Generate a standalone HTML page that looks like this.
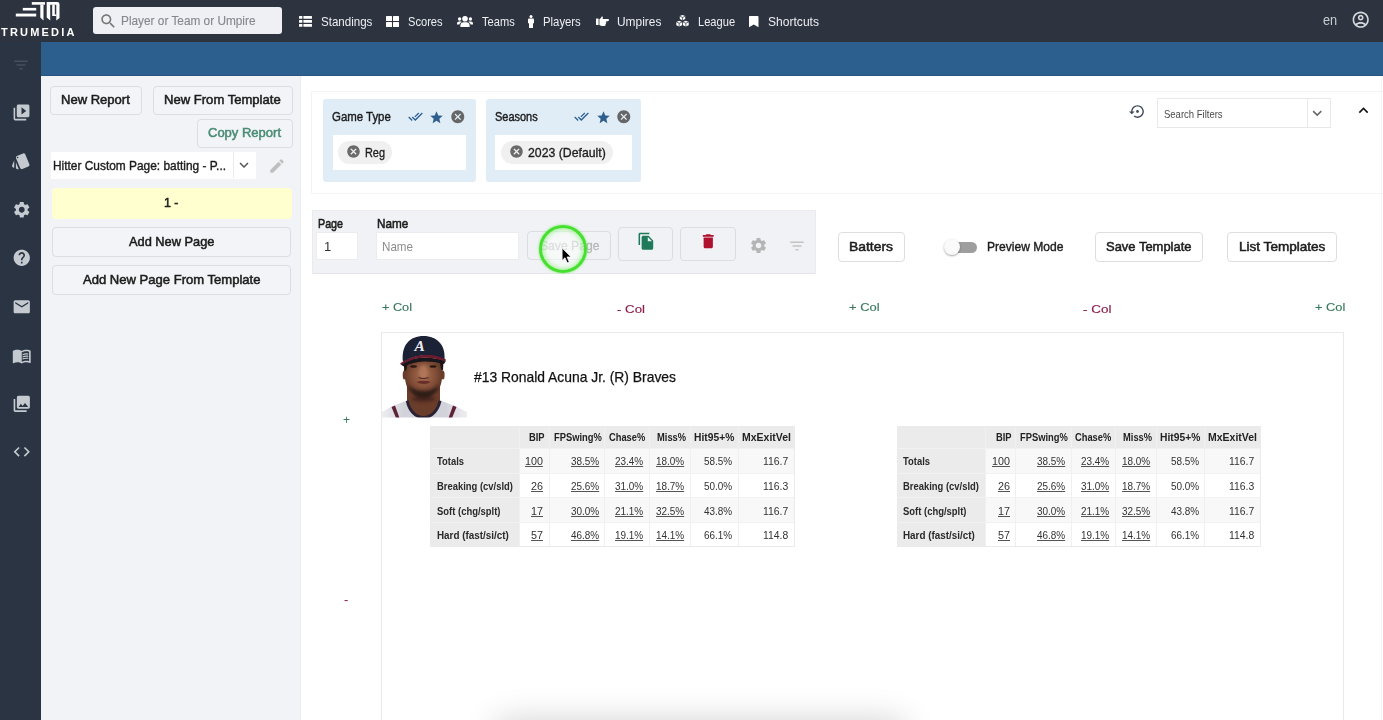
<!DOCTYPE html>
<html lang="en"><head><meta charset="utf-8"><title>TruMedia - Custom Page Builder</title>
<style>

*{box-sizing:border-box;margin:0;padding:0}
html,body{width:1383px;height:720px;overflow:hidden;background:#fff;font-family:"Liberation Sans",sans-serif}
.a{position:absolute}
.t{position:absolute;white-space:nowrap;line-height:1;transform-origin:0 0;font-family:"Liberation Sans",sans-serif}
svg{position:absolute;display:block;overflow:visible}
.btn{position:absolute;border:1px solid #dcdde0;border-radius:4px;background:#f3f4f7}
.wbtn{position:absolute;border:1px solid #dedede;border-radius:4px;background:#fff}
.u{text-decoration:underline}

</style></head><body>
<div id="app" style="position:relative;width:1383px;height:720px;overflow:hidden;background:#fff">
<div class="a" style="left:0px;top:0px;width:1383px;height:42px;background:#2d3440"></div>
<div class="a" style="left:0px;top:42px;width:41px;height:678px;background:#2b3442"></div>
<div class="a" style="left:41px;top:42px;width:1342px;height:34px;background:#2c5f8e;border-bottom:1px solid #27557f"></div>
<div class="a" style="left:41px;top:76px;width:260px;height:644px;background:#f1f3f7;border-right:1px solid #ebecf3"></div>
<header>
<svg style="left:0;top:0" width="80" height="24" viewBox="0 0 80 24">
<g fill="#fff">
<rect x="31.8" y="2.100" width="13.200" height="2.600"/>
<rect x="22.800" y="7.900" width="13.400" height="2.600"/>
<rect x="15.800" y="13.600" width="20.400" height="2.900"/>
<path d="M40.300 4.600h3.200v16l-3.200-3z"/>
<path d="M46.700 2.100h10.600q2.200 0 2.200 2.200v13.600l-3.200 2.700V4.700h-6.100v15.900l-3.500-3z"/>
<path d="M52.200 4.600h2.600v9.800h1.600v1.600h-4.200z"/>
</g></svg>
<span class="t" style="left:1.00px;top:27.19px;font-size:11px;font-weight:700;color:#fff;letter-spacing:2.191px;will-change:transform;">TRUMEDIA</span>
<div class="a" style="left:92.5px;top:7px;width:189px;height:27px;background:#eef0f4;border-radius:3px"></div>
<svg style="left:98.5px;top:12.3px" width="18.5" height="18.5" viewBox="0 0 24 24" ><path fill="#777" d="M15.500 14h-.790l-.280-.270C15.410 12.590 16 11.110 16 9.500 16 5.910 13.090 3 9.500 3S3 5.910 3 9.500 5.910 16 9.500 16c1.610 0 3.090-.590 4.230-1.570l.270.280v.790l5 4.990L20.490 19l-4.990-5zm-6 0C7.010 14 5 11.990 5 9.500S7.010 5 9.500 5 14 7.010 14 9.500 11.990 14 9.500 14z"/></svg>
<span class="t" style="left:120.50px;top:13.97px;font-size:13.5px;font-weight:400;color:#85888d;-webkit-text-stroke:0.15px #85888d;transform:scaleX(0.8759);">Player or Team or Umpire</span>
<span class="t" style="left:321.00px;top:15.20px;font-size:13px;font-weight:400;color:#eceef1;transform:scaleX(0.8888);">Standings</span>
<span class="t" style="left:408.00px;top:15.20px;font-size:13px;font-weight:400;color:#eceef1;transform:scaleX(0.8550);">Scores</span>
<span class="t" style="left:481.70px;top:15.20px;font-size:13px;font-weight:400;color:#eceef1;transform:scaleX(0.8539);">Teams</span>
<span class="t" style="left:543.20px;top:15.20px;font-size:13px;font-weight:400;color:#eceef1;transform:scaleX(0.8718);">Players</span>
<span class="t" style="left:617.20px;top:15.20px;font-size:13px;font-weight:400;color:#eceef1;transform:scaleX(0.9172);">Umpires</span>
<span class="t" style="left:697.50px;top:15.20px;font-size:13px;font-weight:400;color:#eceef1;transform:scaleX(0.8550);">League</span>
<span class="t" style="left:767.50px;top:15.20px;font-size:13px;font-weight:400;color:#eceef1;transform:scaleX(0.9286);">Shortcuts</span>
<svg style="left:299px;top:16px" width="13" height="11" viewBox="0 0 13 11"><g fill="#fff">
<rect x="0" y="0" width="3.400" height="2.800" rx=".5"/><rect x="4.400" y="0" width="8.600" height="2.800" rx=".5"/>
<rect x="0" y="4" width="3.400" height="2.800" rx=".5"/><rect x="4.400" y="4" width="8.600" height="2.800" rx=".5"/>
<rect x="0" y="8" width="3.400" height="2.800" rx=".5"/><rect x="4.400" y="8" width="8.600" height="2.800" rx=".5"/></g></svg>
<svg style="left:386px;top:16px" width="13" height="11" viewBox="0 0 13 11"><g fill="#fff">
<rect x="0" y="0" width="6" height="5" rx=".5"/><rect x="7" y="0" width="6" height="5" rx=".5"/>
<rect x="0" y="6" width="6" height="5" rx=".5"/><rect x="7" y="6" width="6" height="5" rx=".5"/></g></svg>
<svg style="left:456.500px;top:16px" width="16" height="11" viewBox="0 0 16 11"><g fill="#fff">
<circle cx="8" cy="2.800" r="2.800"/><path d="M3.400 11v-1.600c0-2 1.600-3.200 3.200-3.200h2.800c1.600 0 3.200 1.200 3.200 3.200V11z"/>
<circle cx="2.600" cy="3" r="1.700"/><circle cx="13.400" cy="3" r="1.700"/>
<path d="M0 8.400V7.600c0-1.200.9-2 2-2h1.600c.4 0 .8.100 1.100.3C3.500 6.600 2.600 7.600 2.500 8.400z"/>
<path d="M16 8.400V7.600c0-1.200-.9-2-2-2h-1.600c-.4 0-.8.100-1.100.3 1.200.7 2.100 1.700 2.200 2.500z"/></g></svg>
<svg style="left:528px;top:15px" width="6" height="13" viewBox="0 0 6 13"><g fill="#fff">
<circle cx="3" cy="1.500" r="1.500"/><path d="M1.200 3.400h3.600c.7 0 1.200.5 1.200 1.200v3.600H5V13H1V8.200H0V4.600c0-.7.500-1.200 1.200-1.200z"/></g></svg>
<svg style="left:595.500px;top:16px" width="13" height="10" viewBox="0 0 13 10"><g fill="#fff">
<rect x="0" y="2.600" width="2.600" height="6.400" rx=".4"/>
<path d="M3.400 3.200c1-.3 1.600-1.200 2-2.200.3-.8 1.400-.6 1.500.2.100.6-.1 1.200-.4 1.800h5.300c.7 0 1.200.5 1.200 1.100s-.5 1.100-1.200 1.100H9.600c.5.100.8.500.8.900 0 .5-.4.900-.9.900.4.100.6.400.6.800s-.4.800-.9.800c.2.100.3.300.3.600 0 .4-.4.700-.8.700H5.600c-.8 0-1.500-.3-2.200-.800z"/></g></svg>
<svg style="left:675.500px;top:15px" width="13" height="12" viewBox="0 0 13 12"><g fill="#fff">
<path d="M6.500 0l2.700 1.100v3L6.500 5.300 3.800 4.100v-3z"/><path d="M3.200 5.700l2.900 1.200v3.300L3.200 11.600.3 10.200V6.900z"/><path d="M9.800 5.700l2.900 1.200v3.300l-2.900 1.400-2.900-1.400V6.900z"/></g>
<g fill="none" stroke="#2d3440" stroke-width=".7"><path d="M3.800 1.300l2.700 1.100 2.700-1.100M6.500 2.400v2.700M.3 7l2.900 1.200 2.900-1.200M3.200 8.200v3.200M6.900 7l2.900 1.200 2.900-1.200M9.800 8.200v3.200"/></g></svg>
<svg style="left:748.700px;top:16.200px" width="9.500" height="11.200" viewBox="0 0 9.500 11.200"><path fill="#fff" d="M0 1C0 .4.400 0 1 0h7.500c.6 0 1 .4 1 1v10.200L4.750 8.400 0 11.200z"/></svg>
<span class="t" style="left:1322.60px;top:12.53px;font-size:14.5px;font-weight:400;color:#c8ccd2;transform:scaleX(0.8798);">en</span>
<svg style="left:1351.4px;top:10px" width="19.4" height="19.4" viewBox="0 0 24 24" ><path fill="#d5d8dd" d="M12 2C6.480 2 2 6.480 2 12s4.480 10 10 10 10-4.480 10-10S17.520 2 12 2zM7.350 18.500C8.660 17.560 10.260 17 12 17s3.340.560 4.650 1.500C15.340 19.440 13.740 20 12 20s-3.340-.560-4.650-1.500zm10.790-1.380C16.450 15.800 14.320 15 12 15s-4.450.8-6.140 2.120C4.700 15.730 4 13.950 4 12c0-4.420 3.580-8 8-8s8 3.580 8 8c0 1.950-.7 3.730-1.860 5.120zM12 6c-1.930 0-3.500 1.570-3.500 3.500S10.070 13 12 13s3.500-1.570 3.500-3.500S13.930 6 12 6zm0 5c-.830 0-1.500-.670-1.500-1.500S11.170 8 12 8s1.500.670 1.500 1.500S12.830 11 12 11z"/></svg>
</header>
<nav>
<svg style="left:12px;top:55.5px" width="18" height="18" viewBox="0 0 24 24" ><path fill="#454e5c" d="M10 18h4v-2h-4v2zM3 6v2h18V6H3zm3 7h12v-2H6v2z"/></svg>
<svg style="left:11.5px;top:102.5px" width="19" height="19" viewBox="0 0 24 24" ><path fill="#c5cad1" d="M4 6H2v14c0 1.1.9 2 2 2h14v-2H4V6zm16-4H8c-1.1 0-2 .9-2 2v12c0 1.1.9 2 2 2h12c1.1 0 2-.9 2-2V4c0-1.1-.9-2-2-2zm-8 12.5v-9l6 4.500-6 4.500z"/></svg>
<svg style="left:11px;top:150.5px" width="20" height="20" viewBox="0 0 24 24" ><path fill="#c5cad1" d="M2.530 19.650l1.340.560v-9.030l-2.430 5.860c-.410 1.020.080 2.190 1.090 2.610zm19.500-3.700L17.070 3.980c-.310-.750-1.040-1.210-1.810-1.230-.260 0-.530.040-.790.150L7.100 5.950c-.750.310-1.210 1.030-1.230 1.800-.010.270.040.540.150.800l4.960 11.970c.310.760 1.050 1.220 1.830 1.230.260 0 .520-.050.770-.150l7.360-3.050c1.020-.420 1.510-1.590 1.090-2.600zM7.880 8.750c-.550 0-1-.450-1-1s.450-1 1-1 1 .450 1 1-.450 1-1 1zm-2 11c0 1.100.9 2 2 2h1.450l-3.450-8.340v6.340z"/></svg>
<svg style="left:11.5px;top:199.5px" width="19.5" height="19.5" viewBox="0 0 24 24" ><path fill="#c5cad1" d="M19.140 12.940c.040-.3.060-.610.060-.940 0-.320-.020-.640-.070-.940l2.030-1.580c.180-.140.230-.410.120-.610l-1.920-3.320c-.120-.220-.370-.290-.590-.220l-2.390.960c-.5-.380-1.030-.7-1.620-.940l-.360-2.540c-.040-.240-.240-.410-.480-.410h-3.840c-.240 0-.430.170-.470.410l-.360 2.540c-.590.240-1.130.570-1.620.940l-2.390-.960c-.220-.080-.470 0-.590.220L2.740 8.870c-.120.210-.080.470.120.610l2.030 1.580c-.050.3-.090.630-.090.940s.020.640.070.940l-2.030 1.580c-.180.140-.230.410-.120.610l1.920 3.320c.120.220.370.290.590.220l2.390-.960c.5.380 1.030.7 1.620.940l.360 2.540c.050.240.240.410.480.410h3.840c.240 0 .440-.170.470-.410l.360-2.540c.590-.240 1.130-.560 1.620-.940l2.390.960c.220.080.470 0 .590-.220l1.920-3.320c.120-.220.070-.470-.120-.610l-2.010-1.580zM12 15.600c-1.980 0-3.600-1.620-3.600-3.600s1.620-3.600 3.600-3.600 3.600 1.620 3.600 3.600-1.620 3.600-3.600 3.600z"/></svg>
<svg style="left:11.5px;top:248px" width="19.5" height="19.5" viewBox="0 0 24 24" ><path fill="#c5cad1" d="M12 2C6.480 2 2 6.480 2 12s4.480 10 10 10 10-4.480 10-10S17.520 2 12 2zm1 17h-2v-2h2v2zm2.070-7.750l-.9.920C13.450 12.900 13 13.500 13 15h-2v-.5c0-1.100.450-2.100 1.170-2.830l1.240-1.260c.370-.360.590-.860.590-1.410 0-1.100-.9-2-2-2s-2 .9-2 2H8c0-2.210 1.790-4 4-4s4 1.790 4 4c0 .880-.360 1.680-.930 2.250z"/></svg>
<svg style="left:11.5px;top:296.5px" width="19.5" height="19.5" viewBox="0 0 24 24" ><path fill="#c5cad1" d="M20 4H4c-1.100 0-1.990.9-1.990 2L2 18c0 1.100.9 2 2 2h16c1.100 0 2-.9 2-2V6c0-1.100-.9-2-2-2zm0 4l-8 5-8-5V6l8 5 8-5v2z"/></svg>
<svg style="left:11.5px;top:346px" width="19.5" height="19.5" viewBox="0 0 24 24" ><path fill="#c5cad1" d="M21 5c-1.110-.350-2.330-.5-3.500-.5-1.950 0-4.050.4-5.500 1.500-1.450-1.100-3.550-1.500-5.500-1.500S2.450 4.900 1 6v14.650c0 .250.250.5.5.5.1 0 .150-.050.250-.050C3.100 20.450 5.050 20 6.500 20c1.950 0 4.050.4 5.500 1.500 1.350-.850 3.800-1.500 5.500-1.500 1.650 0 3.350.3 4.750 1.050.1.050.150.050.250.050.250 0 .5-.250.5-.5V6c-.6-.450-1.250-.750-2-1zm0 13.500c-1.100-.350-2.300-.5-3.500-.5-1.700 0-4.150.650-5.500 1.500V8c1.350-.850 3.800-1.500 5.500-1.500 1.200 0 2.400.150 3.500.5v11.500zM17.500 10.500c.880 0 1.730.090 2.500.260V9.240c-.790-.150-1.640-.240-2.500-.240-1.700 0-3.240.290-4.500.830v1.660c1.130-.640 2.700-.990 4.500-.990zM13 12.490v1.660c1.130-.640 2.700-.990 4.500-.990.880 0 1.730.090 2.500.260V11.900c-.790-.150-1.640-.240-2.500-.240-1.700 0-3.240.3-4.500.830zM17.500 14.330c-1.700 0-3.240.290-4.500.830v1.660c1.130-.640 2.700-.990 4.500-.990.880 0 1.730.090 2.500.260v-1.520c-.790-.160-1.640-.240-2.500-.240z"/></svg>
<svg style="left:11.5px;top:394px" width="19.5" height="19.5" viewBox="0 0 24 24" ><path fill="#c5cad1" d="M22 16V4c0-1.100-.9-2-2-2H8c-1.100 0-2 .9-2 2v12c0 1.100.9 2 2 2h12c1.100 0 2-.9 2-2zm-11-4l2.030 2.710L16 11l4 5H8l3-4zM2 6v14c0 1.100.9 2 2 2h14v-2H4V6H2z"/></svg>
<svg style="left:11.5px;top:442px" width="19.5" height="19.5" viewBox="0 0 24 24" ><path fill="#c5cad1" d="M9.400 16.600L4.800 12l4.600-4.600L8 6l-6 6 6 6 1.400-1.400zm5.200 0l4.600-4.600-4.600-4.600L16 6l6 6-6 6-1.400-1.400z"/></svg>
</nav>
<aside>
<div class="btn" style="left:50px;top:86px;width:91.5px;height:28.5px;"></div>
<div class="btn" style="left:153px;top:86px;width:139.5px;height:28.5px;"></div>
<div class="btn" style="left:197px;top:118.5px;width:95.5px;height:29px;"></div>
<span class="t" style="left:60.80px;top:94.30px;font-size:12.4px;font-weight:400;color:#1c1c1c;-webkit-text-stroke:0.5px #1c1c1c;transform:scaleX(1.0516);">New Report</span>
<span class="t" style="left:163.90px;top:94.30px;font-size:12.4px;font-weight:400;color:#1c1c1c;-webkit-text-stroke:0.5px #1c1c1c;transform:scaleX(1.0548);">New From Template</span>
<span class="t" style="left:208.00px;top:126.80px;font-size:12.4px;font-weight:400;color:#4a8c73;-webkit-text-stroke:0.5px #4a8c73;transform:scaleX(1.0494);">Copy Report</span>
<div class="a" style="left:50.5px;top:151.5px;width:205px;height:27px;background:#fff"></div>
<div class="a" style="left:232.5px;top:152px;width:1px;height:26px;background:#ececec"></div>
<span class="t" style="left:53.40px;top:158.57px;font-size:13.5px;font-weight:400;color:#1c1c1c;-webkit-text-stroke:0.4px #1c1c1c;transform:scaleX(0.8811);">Hitter Custom Page: batting - P...</span>
<svg style="left:235px;top:155.5px" width="18" height="18" viewBox="0 0 24 24" ><path fill="#555" d="M16.590 8.590L12 13.170 7.410 8.590 6 10l6 6 6-6z"/></svg>
<svg style="left:267.5px;top:157px" width="18" height="18" viewBox="0 0 24 24" ><path fill="#bfbfbf" d="M3 17.250V21h3.750L17.810 9.940l-3.750-3.750L3 17.250zM20.710 7.040c.390-.390.390-1.020 0-1.410l-2.340-2.340c-.390-.390-1.020-.390-1.410 0l-1.830 1.830 3.750 3.750 1.830-1.830z"/></svg>
<div class="a" style="left:52.2px;top:188px;width:239.6px;height:31.2px;background:#ffffd0;border-radius:4px"></div>
<span class="t" style="left:163.50px;top:196.80px;font-size:12.4px;font-weight:400;color:#1c1c1c;-webkit-text-stroke:0.5px #1c1c1c;transform:scaleX(1.0022);">1 -</span>
<div class="btn" style="left:52px;top:227px;width:239px;height:29.5px;"></div>
<div class="btn" style="left:52px;top:265px;width:239px;height:29.5px;"></div>
<span class="t" style="left:128.50px;top:236.00px;font-size:12.4px;font-weight:400;color:#1c1c1c;-webkit-text-stroke:0.5px #1c1c1c;transform:scaleX(1.0342);">Add New Page</span>
<span class="t" style="left:82.50px;top:273.80px;font-size:12.4px;font-weight:400;color:#1c1c1c;-webkit-text-stroke:0.5px #1c1c1c;transform:scaleX(1.0533);">Add New Page From Template</span>
</aside>
<main>
<div class="a" style="left:310.5px;top:91px;width:1072px;height:103px;background:#fff;border:1px solid #f4f4f4;border-right:none"></div>
<div class="a" style="left:1381px;top:76px;width:1px;height:644px;background:#f5f5f8"></div>
<div class="a" style="left:323px;top:99px;width:152.7px;height:83px;background:#e0edf7;border-radius:3px"></div>
<div class="a" style="left:332.5px;top:134.8px;width:133.7px;height:35px;background:#fff"></div>
<span class="t" style="left:331.80px;top:110.07px;font-size:13.5px;font-weight:400;color:#1d1d1d;-webkit-text-stroke:0.45px #1d1d1d;transform:scaleX(0.8455);">Game Type</span>
<svg style="left:407.7px;top:108.5px" width="15" height="15" viewBox="0 0 24 24" ><path fill="#2d5f8e" d="M18 7l-1.410-1.410-6.340 6.340 1.410 1.410L18 7zm4.240-1.410L11.660 16.170 7.480 12l-1.410 1.410L11.660 19l12-12-1.420-1.410zM.410 13.410L6 19l1.410-1.410L1.830 12 .410 13.410z"/></svg>
<svg style="left:429.2px;top:109.5px" width="15" height="15" viewBox="0 0 24 24" ><path fill="#2d5f8e" d="M12 17.270L18.180 21l-1.640-7.030L22 9.240l-7.190-.610L12 2 9.190 8.630 2 9.240l5.460 4.730L5.820 21z"/></svg>
<svg style="left:449.5px;top:109px" width="15.6" height="15.6" viewBox="0 0 24 24" ><path fill="#666" d="M12 2C6.470 2 2 6.470 2 12s4.470 10 10 10 10-4.470 10-10S17.530 2 12 2zm5 13.590L15.590 17 12 13.410 8.410 17 7 15.590 10.590 12 7 8.410 8.410 7 12 10.590 15.590 7 17 8.410 13.410 12 17 15.590z"/></svg>
<div class="a" style="left:338.3px;top:140.5px;width:54px;height:23.5px;background:#f0f0f0;border-radius:12px"></div>
<svg style="left:346px;top:144.2px" width="15" height="15" viewBox="0 0 24 24" ><path fill="#6a6a6a" d="M12 2C6.470 2 2 6.470 2 12s4.470 10 10 10 10-4.470 10-10S17.530 2 12 2zm5 13.590L15.590 17 12 13.410 8.410 17 7 15.590 10.590 12 7 8.410 8.410 7 12 10.590 15.590 7 17 8.410 13.410 12 17 15.590z"/></svg>
<span class="t" style="left:364.70px;top:145.77px;font-size:13.5px;font-weight:400;color:#1d1d1d;-webkit-text-stroke:0.35px #1d1d1d;transform:scaleX(0.8076);">Reg</span>
<div class="a" style="left:485.9px;top:99px;width:155.4px;height:83px;background:#e0edf7;border-radius:3px"></div>
<div class="a" style="left:495.4px;top:134.8px;width:136.4px;height:35px;background:#fff"></div>
<span class="t" style="left:494.70px;top:110.07px;font-size:13.5px;font-weight:400;color:#1d1d1d;-webkit-text-stroke:0.45px #1d1d1d;transform:scaleX(0.8126);">Seasons</span>
<svg style="left:574.3px;top:108.5px" width="15" height="15" viewBox="0 0 24 24" ><path fill="#2d5f8e" d="M18 7l-1.410-1.410-6.340 6.340 1.410 1.410L18 7zm4.240-1.410L11.660 16.170 7.480 12l-1.410 1.410L11.660 19l12-12-1.420-1.410zM.410 13.410L6 19l1.410-1.410L1.830 12 .410 13.410z"/></svg>
<svg style="left:595.8px;top:109.5px" width="15" height="15" viewBox="0 0 24 24" ><path fill="#2d5f8e" d="M12 17.270L18.180 21l-1.640-7.030L22 9.240l-7.190-.610L12 2 9.190 8.630 2 9.240l5.460 4.730L5.820 21z"/></svg>
<svg style="left:616.0999999999999px;top:109px" width="15.6" height="15.6" viewBox="0 0 24 24" ><path fill="#666" d="M12 2C6.470 2 2 6.470 2 12s4.470 10 10 10 10-4.470 10-10S17.530 2 12 2zm5 13.590L15.590 17 12 13.410 8.410 17 7 15.590 10.590 12 7 8.410 8.410 7 12 10.590 15.590 7 17 8.410 13.410 12 17 15.590z"/></svg>
<div class="a" style="left:501.2px;top:140.5px;width:112px;height:23.5px;background:#f0f0f0;border-radius:12px"></div>
<svg style="left:508.9px;top:144.2px" width="15" height="15" viewBox="0 0 24 24" ><path fill="#6a6a6a" d="M12 2C6.470 2 2 6.470 2 12s4.470 10 10 10 10-4.470 10-10S17.530 2 12 2zm5 13.590L15.590 17 12 13.410 8.410 17 7 15.590 10.590 12 7 8.410 8.410 7 12 10.590 15.590 7 17 8.410 13.410 12 17 15.590z"/></svg>
<span class="t" style="left:527.60px;top:145.77px;font-size:13.5px;font-weight:400;color:#1d1d1d;-webkit-text-stroke:0.35px #1d1d1d;transform:scaleX(0.9093);">2023 (Default)</span>
<svg style="left:1128.6px;top:102.7px" width="17" height="17" viewBox="0 0 24 24" ><path fill="#3f4b5b" d="M14 12c0-1.100-.9-2-2-2s-2 .9-2 2 .9 2 2 2 2-.9 2-2zm-2-9c-4.970 0-9 4.030-9 9H0l4 4 4-4H5c0-3.870 3.130-7 7-7s7 3.130 7 7-3.130 7-7 7c-1.510 0-2.910-.490-4.060-1.300l-1.420 1.440C8.040 20.300 9.940 21 12 21c4.970 0 9-4.030 9-9s-4.030-9-9-9z"/></svg>
<div class="a" style="left:1157px;top:98px;width:173.5px;height:29.7px;background:#fff;border:1px solid #e8e8e8"></div>
<div class="a" style="left:1306.5px;top:99px;width:1px;height:28px;background:#e8e8e8"></div>
<span class="t" style="left:1164.20px;top:108.61px;font-size:10.5px;font-weight:400;color:#4a4a4a;transform:scaleX(0.9046);">Search Filters</span>
<svg style="left:1308.2px;top:103.9px" width="18.4" height="18.4" viewBox="0 0 24 24" ><path fill="#666" d="M16.590 8.590L12 13.170 7.410 8.590 6 10l6 6 6-6z"/></svg>
<svg style="left:1353.5px;top:101.1px" width="19" height="19" viewBox="0 0 24 24" ><path fill="#111" d="M12 8l-6 6 1.410 1.410L12 10.830l4.590 4.580L18 14z"/></svg>
<div class="a" style="left:312px;top:210px;width:504px;height:63.6px;background:#f1f2f5;border:1px solid #ebebef;border-bottom-color:#e6e6ea"></div>
<span class="t" style="left:318.00px;top:217.27px;font-size:13.5px;font-weight:400;color:#1d1d1d;-webkit-text-stroke:0.6px #1d1d1d;transform:scaleX(0.7929);">Page</span>
<span class="t" style="left:376.70px;top:217.27px;font-size:13.5px;font-weight:400;color:#1d1d1d;-webkit-text-stroke:0.6px #1d1d1d;transform:scaleX(0.8691);">Name</span>
<div class="a" style="left:316px;top:232px;width:41.5px;height:28px;background:#fff;border:1px solid #ececf0"></div>
<div class="a" style="left:375.5px;top:232px;width:143px;height:28px;background:#fff;border:1px solid #ececf0"></div>
<span class="t" style="left:323.50px;top:240.00px;font-size:13px;font-weight:400;color:#333;will-change:transform;">1</span>
<span class="t" style="left:382.30px;top:239.57px;font-size:13.5px;font-weight:400;color:#8c8c8c;transform:scaleX(0.8607);">Name</span>
<div class="btn" style="left:527.3px;top:231.4px;width:83.5px;height:29.1px;background:#f1f2f5;border-color:#dcdce1"></div>
<span class="t" style="left:540.00px;top:239.70px;font-size:12.4px;font-weight:400;color:#b8b8ba;-webkit-text-stroke:0.3px #b8b8ba;transform:scaleX(0.9814);">Save Page</span>
<div class="btn" style="left:618px;top:227.4px;width:55.3px;height:33.2px;background:#f1f2f5;border-color:#dcdce1"></div>
<div class="btn" style="left:680px;top:227.4px;width:55.8px;height:33.2px;background:#f1f2f5;border-color:#dcdce1"></div>
<svg style="left:636.5px;top:232px" width="18.5" height="18.5" viewBox="0 0 24 24" ><path fill="#1f7a5a" d="M16 1H4c-1.100 0-2 .9-2 2v14h2V3h12V1zm-1 4l6 6v10c0 1.100-.9 2-2 2H7.990C6.890 23 6 22.100 6 21l.010-14c0-1.100.890-2 1.990-2h7zm-1 7h5.500L14 6.500V12z"/></svg>
<svg style="left:698.5px;top:232px" width="18.5" height="18.5" viewBox="0 0 24 24" ><path fill="#b00f2e" d="M6 19c0 1.100.9 2 2 2h8c1.100 0 2-.9 2-2V7H6v12zM19 4h-3.500l-1-1h-5l-1 1H5v2h14V4z"/></svg>
<svg style="left:748.5px;top:236px" width="19" height="19" viewBox="0 0 24 24" ><path fill="#b5b5b5" d="M19.140 12.940c.040-.3.060-.610.060-.940 0-.320-.020-.640-.070-.940l2.030-1.580c.180-.140.230-.410.120-.610l-1.920-3.320c-.120-.220-.370-.290-.590-.220l-2.390.960c-.5-.380-1.030-.7-1.620-.940l-.360-2.540c-.040-.240-.240-.410-.480-.410h-3.840c-.240 0-.430.170-.470.410l-.360 2.540c-.590.240-1.130.570-1.620.940l-2.390-.960c-.220-.080-.470 0-.590.220L2.740 8.870c-.120.210-.080.470.120.610l2.030 1.580c-.050.3-.090.630-.090.940s.020.640.070.940l-2.030 1.580c-.180.140-.230.410-.120.610l1.920 3.320c.120.220.370.290.590.220l2.390-.960c.5.380 1.030.7 1.620.940l.360 2.540c.050.240.240.410.480.410h3.840c.240 0 .440-.170.470-.410l.360-2.540c.590-.240 1.130-.560 1.620-.940l2.390.960c.220.080.470 0 .590-.220l1.920-3.320c.120-.220.070-.470-.120-.610l-2.010-1.580zM12 15.600c-1.980 0-3.600-1.620-3.600-3.600s1.620-3.600 3.600-3.600 3.600 1.620 3.600 3.600-1.620 3.600-3.600 3.600z"/></svg>
<svg style="left:787.5px;top:236.5px" width="18" height="18" viewBox="0 0 24 24" ><path fill="#c4c4c4" d="M10 18h4v-2h-4v2zM3 6v2h18V6H3zm3 7h12v-2H6v2z"/></svg>
<div class="wbtn" style="left:838.3px;top:232px;width:66.5px;height:29.5px;"></div>
<span class="t" style="left:849.30px;top:240.70px;font-size:12.4px;font-weight:400;color:#1c1c1c;-webkit-text-stroke:0.5px #1c1c1c;transform:scaleX(1.1206);">Batters</span>
<div class="a" style="left:948px;top:241.5px;width:29px;height:11.5px;background:#9e9e9e;border-radius:6px"></div>
<div class="a" style="left:944.2px;top:238.8px;width:16px;height:16px;background:#fafafa;border-radius:50%;box-shadow:0 1px 2px rgba(0,0,0,.35)"></div>
<span class="t" style="left:987.00px;top:240.20px;font-size:13px;font-weight:400;color:#1d1d1d;-webkit-text-stroke:0.4px #1d1d1d;transform:scaleX(0.9287);">Preview Mode</span>
<div class="wbtn" style="left:1094.8px;top:232px;width:108px;height:29.5px;"></div>
<span class="t" style="left:1105.80px;top:240.70px;font-size:12.4px;font-weight:400;color:#1c1c1c;-webkit-text-stroke:0.5px #1c1c1c;transform:scaleX(1.0459);">Save Template</span>
<div class="wbtn" style="left:1227px;top:232px;width:109.5px;height:29.5px;"></div>
<span class="t" style="left:1238.60px;top:240.70px;font-size:12.4px;font-weight:400;color:#1c1c1c;-webkit-text-stroke:0.5px #1c1c1c;transform:scaleX(1.0939);">List Templates</span>
<span class="t" style="left:382.40px;top:301.08px;font-size:11.6px;font-weight:400;color:#38785f;-webkit-text-stroke:0.15px #38785f;transform:scaleX(1.0953);">+ Col</span>
<span class="t" style="left:617.00px;top:302.78px;font-size:11.6px;font-weight:400;color:#8b1d4b;-webkit-text-stroke:0.15px #8b1d4b;transform:scaleX(1.1436);">- Col</span>
<span class="t" style="left:848.50px;top:300.88px;font-size:11.6px;font-weight:400;color:#38785f;-webkit-text-stroke:0.15px #38785f;transform:scaleX(1.1135);">+ Col</span>
<span class="t" style="left:1082.60px;top:302.78px;font-size:11.6px;font-weight:400;color:#8b1d4b;-webkit-text-stroke:0.15px #8b1d4b;transform:scaleX(1.1599);">- Col</span>
<span class="t" style="left:1314.70px;top:300.88px;font-size:11.6px;font-weight:400;color:#38785f;-webkit-text-stroke:0.15px #38785f;transform:scaleX(1.1062);">+ Col</span>
<span class="t" style="left:342.50px;top:413.84px;font-size:12px;font-weight:400;color:#38785f;will-change:transform;">+</span>
<span class="t" style="left:343.50px;top:593.00px;font-size:13px;font-weight:400;color:#8b1d4b;will-change:transform;">-</span>
<div class="a" style="left:381px;top:332px;width:963px;height:400px;background:#fff;border:1px solid #e9e9e9"></div>
<span class="t" style="left:473.50px;top:368.50px;font-size:15px;font-weight:400;color:#111;-webkit-text-stroke:0.25px #111;transform:scaleX(0.9247);">#13 Ronald Acuna Jr. (R) Braves</span>
<svg style="left:381.500px;top:335px" width="85" height="83" viewBox="0 0 85 83">
<defs><filter id="bl" x="-10%" y="-10%" width="120%" height="120%"><feGaussianBlur stdDeviation=".7"/></filter>
<filter id="bl2" x="-20%" y="-20%" width="140%" height="140%"><feGaussianBlur stdDeviation="1.600"/></filter>
<clipPath id="cp"><rect x="0" y="0" width="85" height="82.500"/></clipPath>
<radialGradient id="fg" cx=".5" cy=".42" r=".62"><stop offset="0" stop-color="#a96d52"/><stop offset=".5" stop-color="#855039"/><stop offset="1" stop-color="#4e2c1e"/></radialGradient>
<linearGradient id="jg" x1="0" x2="1" y1="0" y2="0"><stop offset="0" stop-color="#eeeef2"/><stop offset=".25" stop-color="#d2d3da"/><stop offset=".75" stop-color="#d2d3da"/><stop offset="1" stop-color="#eeeef2"/></linearGradient>
</defs>
<g clip-path="url(#cp)">
<g filter="url(#bl)">
<path d="M0 83V77c7-4.500 16-8.500 25-11.500h33.500c9 3 18 7 26.500 11.500v6z" fill="url(#jg)"/>
<path d="M9.500 72l4.500 11h3.500l-4.500-12.500zM74.500 72L70 83h-3.500L71 70.500z" fill="#5e2034"/>
<path d="M25 50v16c2 9 8 17 16.500 17S56 75 58 66V50z" fill="#6a3e2c"/>
<path d="M25.300 65.700C27 75 33 82.500 41.500 82.500S56 75 58 65.700" fill="none" stroke="#2a2232" stroke-width="3"/>
<path d="M23 24c-.8 9-.8 19 1.200 25.500 2.500 8 10 13.500 17.300 13.500s14.800-5.500 17.300-13.500c2-6.500 2-16.500 1.200-25.500z" fill="url(#fg)"/>
<ellipse cx="22.300" cy="40" rx="1.600" ry="4.500" fill="#6a3e2c"/><ellipse cx="61" cy="40" rx="1.600" ry="4.500" fill="#6a3e2c"/>
<path d="M21.800 27h4l-1.500 8-2 1.500zM61.500 25h-4l1.500 9 2 1.500z" fill="#1d1512"/>
</g>
<g filter="url(#bl2)">
<path d="M26 50c2 7 8 13 15.500 13S55 57 57 50c-4 4-9 6-15.500 6S30 54 26 50z" fill="#2f1b14"/>
<ellipse cx="41.500" cy="37" rx="4.500" ry="7" fill="#b47a5c" opacity=".8"/>
<ellipse cx="41.500" cy="64" rx="12" ry="3" fill="#3a2018" opacity=".7"/>
</g>
<g filter="url(#bl)">
<ellipse cx="31.500" cy="31.500" rx="3.400" ry="1.200" fill="#2a1810"/><ellipse cx="51" cy="31.500" rx="3.400" ry="1.200" fill="#2a1810"/>
<path d="M34.500 47c4.500-1.800 9.500-1.800 14 0-3 2.600-10.500 2.600-14 0z" fill="#6b2e2a"/>
<path d="M36.500 42.500q5 2 10 0" stroke="#4e2a1e" stroke-width="1.200" fill="none"/>
<path d="M21 27C19 10 28 1 41.500 1 55 1 64 10 62.500 25 52 20 41.500 20.500 41.500 20.500S30 21 21 27z" fill="#1b2036"/>
<path d="M19 29.800Q30 23 41.500 22.600 53 22.300 63.500 26.500L62 29Q52 26.300 41.500 26.600 31 27 22 31.500z" fill="#15121a"/>
<path d="M18.300 28.300Q30 20.300 41.500 19.900 53 19.500 63.700 24.300L63.600 26.700Q53 22.400 41.500 22.700 30 23.100 18.900 30z" fill="#6b1c2e"/>
</g>
</g>
<text x="32.500" y="16.300" font-family="Liberation Serif, serif" font-style="italic" font-weight="700" font-size="15.500" fill="#ecebf2">A</text>
</svg>
<div class="a" style="left:430.2px;top:426.3px;width:364.8px;height:22.099999999999966px;background:#ebebeb"></div>
<div class="a" style="left:519.5px;top:448.4px;width:275.5px;height:24.600000000000023px;background:#f8f8f8"></div>
<div class="a" style="left:519.5px;top:473px;width:275.5px;height:24.69999999999999px;background:#fff"></div>
<div class="a" style="left:519.5px;top:497.7px;width:275.5px;height:24.69999999999999px;background:#f8f8f8"></div>
<div class="a" style="left:519.5px;top:522.4px;width:275.5px;height:24.600000000000023px;background:#fff"></div>
<div class="a" style="left:430.2px;top:448.4px;width:89.30000000000001px;height:98.60000000000002px;background:#ebebeb"></div>
<div class="a" style="left:430.2px;top:447.9px;width:364.8px;height:1px;background:#f2f2f2"></div>
<div class="a" style="left:430.2px;top:472.5px;width:364.8px;height:1px;background:#f2f2f2"></div>
<div class="a" style="left:430.2px;top:497.2px;width:364.8px;height:1px;background:#f2f2f2"></div>
<div class="a" style="left:430.2px;top:521.9px;width:364.8px;height:1px;background:#f2f2f2"></div>
<div class="a" style="left:519.0px;top:426.3px;width:1px;height:120.69999999999999px;background:#f0f0f0"></div>
<div class="a" style="left:548.5px;top:426.3px;width:1px;height:120.69999999999999px;background:#f0f0f0"></div>
<div class="a" style="left:604.2px;top:426.3px;width:1px;height:120.69999999999999px;background:#f0f0f0"></div>
<div class="a" style="left:649.0px;top:426.3px;width:1px;height:120.69999999999999px;background:#f0f0f0"></div>
<div class="a" style="left:689.5px;top:426.3px;width:1px;height:120.69999999999999px;background:#f0f0f0"></div>
<div class="a" style="left:737.5px;top:426.3px;width:1px;height:120.69999999999999px;background:#f0f0f0"></div>
<div class="a" style="left:430.2px;top:426.3px;width:364.8px;height:120.69999999999999px;border:1px solid #ebebeb"></div>
<span class="t" style="left:529.40px;top:432.60px;font-size:10.4px;font-weight:700;color:#222;transform:scaleX(0.9003);">BIP</span>
<span class="t" style="left:553.50px;top:432.60px;font-size:10.4px;font-weight:700;color:#222;transform:scaleX(0.9016);">FPSwing%</span>
<span class="t" style="left:609.00px;top:432.60px;font-size:10.4px;font-weight:700;color:#222;transform:scaleX(0.8977);">Chase%</span>
<span class="t" style="left:656.90px;top:432.60px;font-size:10.4px;font-weight:700;color:#222;transform:scaleX(0.8997);">Miss%</span>
<span class="t" style="left:693.70px;top:432.60px;font-size:10.4px;font-weight:700;color:#222;transform:scaleX(0.9897);">Hit95+%</span>
<span class="t" style="left:742.00px;top:432.60px;font-size:10.4px;font-weight:700;color:#222;transform:scaleX(1.0100);">MxExitVel</span>
<span class="t" style="left:437.00px;top:456.80px;font-size:10.4px;font-weight:700;color:#2a2a2a;transform:scaleX(0.9052);">Totals</span>
<span class="t" style="left:525.30px;top:456.80px;font-size:10.4px;font-weight:400;color:#333;transform:scaleX(1.0321);text-decoration:underline;text-decoration-thickness:1px;text-underline-offset:0.6px;text-decoration-color:#555;">100</span>
<span class="t" style="left:571.10px;top:456.80px;font-size:10.4px;font-weight:400;color:#333;transform:scaleX(0.9569);text-decoration:underline;text-decoration-thickness:1px;text-underline-offset:0.6px;text-decoration-color:#555;">38.5%</span>
<span class="t" style="left:615.00px;top:456.80px;font-size:10.4px;font-weight:400;color:#333;transform:scaleX(0.9569);text-decoration:underline;text-decoration-thickness:1px;text-underline-offset:0.6px;text-decoration-color:#555;">23.4%</span>
<span class="t" style="left:655.70px;top:456.80px;font-size:10.4px;font-weight:400;color:#333;transform:scaleX(0.9569);text-decoration:underline;text-decoration-thickness:1px;text-underline-offset:0.6px;text-decoration-color:#555;">18.0%</span>
<span class="t" style="left:704.30px;top:456.80px;font-size:10.4px;font-weight:400;color:#333;transform:scaleX(0.9569);">58.5%</span>
<span class="t" style="left:763.10px;top:456.80px;font-size:10.4px;font-weight:400;color:#333;will-change:transform;">116.7</span>
<span class="t" style="left:437.00px;top:481.60px;font-size:10.4px;font-weight:700;color:#2a2a2a;transform:scaleX(0.9064);">Breaking (cv/sld)</span>
<span class="t" style="left:531.20px;top:481.60px;font-size:10.4px;font-weight:400;color:#333;transform:scaleX(1.0378);text-decoration:underline;text-decoration-thickness:1px;text-underline-offset:0.6px;text-decoration-color:#555;">26</span>
<span class="t" style="left:571.10px;top:481.60px;font-size:10.4px;font-weight:400;color:#333;transform:scaleX(0.9569);text-decoration:underline;text-decoration-thickness:1px;text-underline-offset:0.6px;text-decoration-color:#555;">25.6%</span>
<span class="t" style="left:615.00px;top:481.60px;font-size:10.4px;font-weight:400;color:#333;transform:scaleX(0.9569);text-decoration:underline;text-decoration-thickness:1px;text-underline-offset:0.6px;text-decoration-color:#555;">31.0%</span>
<span class="t" style="left:655.70px;top:481.60px;font-size:10.4px;font-weight:400;color:#333;transform:scaleX(0.9569);text-decoration:underline;text-decoration-thickness:1px;text-underline-offset:0.6px;text-decoration-color:#555;">18.7%</span>
<span class="t" style="left:704.30px;top:481.60px;font-size:10.4px;font-weight:400;color:#333;transform:scaleX(0.9569);">50.0%</span>
<span class="t" style="left:763.10px;top:481.60px;font-size:10.4px;font-weight:400;color:#333;will-change:transform;">116.3</span>
<span class="t" style="left:437.00px;top:506.70px;font-size:10.4px;font-weight:700;color:#2a2a2a;transform:scaleX(0.9092);">Soft (chg/splt)</span>
<span class="t" style="left:531.20px;top:506.70px;font-size:10.4px;font-weight:400;color:#333;transform:scaleX(1.0378);text-decoration:underline;text-decoration-thickness:1px;text-underline-offset:0.6px;text-decoration-color:#555;">17</span>
<span class="t" style="left:571.10px;top:506.70px;font-size:10.4px;font-weight:400;color:#333;transform:scaleX(0.9569);text-decoration:underline;text-decoration-thickness:1px;text-underline-offset:0.6px;text-decoration-color:#555;">30.0%</span>
<span class="t" style="left:615.00px;top:506.70px;font-size:10.4px;font-weight:400;color:#333;transform:scaleX(0.9569);text-decoration:underline;text-decoration-thickness:1px;text-underline-offset:0.6px;text-decoration-color:#555;">21.1%</span>
<span class="t" style="left:655.70px;top:506.70px;font-size:10.4px;font-weight:400;color:#333;transform:scaleX(0.9569);text-decoration:underline;text-decoration-thickness:1px;text-underline-offset:0.6px;text-decoration-color:#555;">32.5%</span>
<span class="t" style="left:704.30px;top:506.70px;font-size:10.4px;font-weight:400;color:#333;transform:scaleX(0.9569);">43.8%</span>
<span class="t" style="left:763.10px;top:506.70px;font-size:10.4px;font-weight:400;color:#333;will-change:transform;">116.7</span>
<span class="t" style="left:437.00px;top:530.70px;font-size:10.4px;font-weight:700;color:#2a2a2a;transform:scaleX(0.9492);">Hard (fast/si/ct)</span>
<span class="t" style="left:531.20px;top:530.70px;font-size:10.4px;font-weight:400;color:#333;transform:scaleX(1.0378);text-decoration:underline;text-decoration-thickness:1px;text-underline-offset:0.6px;text-decoration-color:#555;">57</span>
<span class="t" style="left:571.10px;top:530.70px;font-size:10.4px;font-weight:400;color:#333;transform:scaleX(0.9569);text-decoration:underline;text-decoration-thickness:1px;text-underline-offset:0.6px;text-decoration-color:#555;">46.8%</span>
<span class="t" style="left:615.00px;top:530.70px;font-size:10.4px;font-weight:400;color:#333;transform:scaleX(0.9569);text-decoration:underline;text-decoration-thickness:1px;text-underline-offset:0.6px;text-decoration-color:#555;">19.1%</span>
<span class="t" style="left:655.70px;top:530.70px;font-size:10.4px;font-weight:400;color:#333;transform:scaleX(0.9569);text-decoration:underline;text-decoration-thickness:1px;text-underline-offset:0.6px;text-decoration-color:#555;">14.1%</span>
<span class="t" style="left:704.30px;top:530.70px;font-size:10.4px;font-weight:400;color:#333;transform:scaleX(0.9569);">66.1%</span>
<span class="t" style="left:763.10px;top:530.70px;font-size:10.4px;font-weight:400;color:#333;will-change:transform;">114.8</span>
<div class="a" style="left:896.5px;top:426.3px;width:364.8px;height:22.099999999999966px;background:#ebebeb"></div>
<div class="a" style="left:985.8px;top:448.4px;width:275.5px;height:24.600000000000023px;background:#f8f8f8"></div>
<div class="a" style="left:985.8px;top:473px;width:275.5px;height:24.69999999999999px;background:#fff"></div>
<div class="a" style="left:985.8px;top:497.7px;width:275.5px;height:24.69999999999999px;background:#f8f8f8"></div>
<div class="a" style="left:985.8px;top:522.4px;width:275.5px;height:24.600000000000023px;background:#fff"></div>
<div class="a" style="left:896.5px;top:448.4px;width:89.30000000000001px;height:98.60000000000002px;background:#ebebeb"></div>
<div class="a" style="left:896.5px;top:447.9px;width:364.8px;height:1px;background:#f2f2f2"></div>
<div class="a" style="left:896.5px;top:472.5px;width:364.8px;height:1px;background:#f2f2f2"></div>
<div class="a" style="left:896.5px;top:497.2px;width:364.8px;height:1px;background:#f2f2f2"></div>
<div class="a" style="left:896.5px;top:521.9px;width:364.8px;height:1px;background:#f2f2f2"></div>
<div class="a" style="left:985.3px;top:426.3px;width:1px;height:120.69999999999999px;background:#f0f0f0"></div>
<div class="a" style="left:1014.8px;top:426.3px;width:1px;height:120.69999999999999px;background:#f0f0f0"></div>
<div class="a" style="left:1070.5px;top:426.3px;width:1px;height:120.69999999999999px;background:#f0f0f0"></div>
<div class="a" style="left:1115.3px;top:426.3px;width:1px;height:120.69999999999999px;background:#f0f0f0"></div>
<div class="a" style="left:1155.8px;top:426.3px;width:1px;height:120.69999999999999px;background:#f0f0f0"></div>
<div class="a" style="left:1203.8px;top:426.3px;width:1px;height:120.69999999999999px;background:#f0f0f0"></div>
<div class="a" style="left:896.5px;top:426.3px;width:364.8px;height:120.69999999999999px;border:1px solid #ebebeb"></div>
<span class="t" style="left:995.70px;top:432.60px;font-size:10.4px;font-weight:700;color:#222;transform:scaleX(0.9003);">BIP</span>
<span class="t" style="left:1019.80px;top:432.60px;font-size:10.4px;font-weight:700;color:#222;transform:scaleX(0.9016);">FPSwing%</span>
<span class="t" style="left:1075.30px;top:432.60px;font-size:10.4px;font-weight:700;color:#222;transform:scaleX(0.8977);">Chase%</span>
<span class="t" style="left:1123.20px;top:432.60px;font-size:10.4px;font-weight:700;color:#222;transform:scaleX(0.8997);">Miss%</span>
<span class="t" style="left:1160.00px;top:432.60px;font-size:10.4px;font-weight:700;color:#222;transform:scaleX(0.9897);">Hit95+%</span>
<span class="t" style="left:1208.30px;top:432.60px;font-size:10.4px;font-weight:700;color:#222;transform:scaleX(1.0100);">MxExitVel</span>
<span class="t" style="left:903.30px;top:456.80px;font-size:10.4px;font-weight:700;color:#2a2a2a;transform:scaleX(0.9052);">Totals</span>
<span class="t" style="left:991.60px;top:456.80px;font-size:10.4px;font-weight:400;color:#333;transform:scaleX(1.0321);text-decoration:underline;text-decoration-thickness:1px;text-underline-offset:0.6px;text-decoration-color:#555;">100</span>
<span class="t" style="left:1037.40px;top:456.80px;font-size:10.4px;font-weight:400;color:#333;transform:scaleX(0.9569);text-decoration:underline;text-decoration-thickness:1px;text-underline-offset:0.6px;text-decoration-color:#555;">38.5%</span>
<span class="t" style="left:1081.30px;top:456.80px;font-size:10.4px;font-weight:400;color:#333;transform:scaleX(0.9569);text-decoration:underline;text-decoration-thickness:1px;text-underline-offset:0.6px;text-decoration-color:#555;">23.4%</span>
<span class="t" style="left:1122.00px;top:456.80px;font-size:10.4px;font-weight:400;color:#333;transform:scaleX(0.9569);text-decoration:underline;text-decoration-thickness:1px;text-underline-offset:0.6px;text-decoration-color:#555;">18.0%</span>
<span class="t" style="left:1170.60px;top:456.80px;font-size:10.4px;font-weight:400;color:#333;transform:scaleX(0.9569);">58.5%</span>
<span class="t" style="left:1229.40px;top:456.80px;font-size:10.4px;font-weight:400;color:#333;will-change:transform;">116.7</span>
<span class="t" style="left:903.30px;top:481.60px;font-size:10.4px;font-weight:700;color:#2a2a2a;transform:scaleX(0.9064);">Breaking (cv/sld)</span>
<span class="t" style="left:997.50px;top:481.60px;font-size:10.4px;font-weight:400;color:#333;transform:scaleX(1.0378);text-decoration:underline;text-decoration-thickness:1px;text-underline-offset:0.6px;text-decoration-color:#555;">26</span>
<span class="t" style="left:1037.40px;top:481.60px;font-size:10.4px;font-weight:400;color:#333;transform:scaleX(0.9569);text-decoration:underline;text-decoration-thickness:1px;text-underline-offset:0.6px;text-decoration-color:#555;">25.6%</span>
<span class="t" style="left:1081.30px;top:481.60px;font-size:10.4px;font-weight:400;color:#333;transform:scaleX(0.9569);text-decoration:underline;text-decoration-thickness:1px;text-underline-offset:0.6px;text-decoration-color:#555;">31.0%</span>
<span class="t" style="left:1122.00px;top:481.60px;font-size:10.4px;font-weight:400;color:#333;transform:scaleX(0.9569);text-decoration:underline;text-decoration-thickness:1px;text-underline-offset:0.6px;text-decoration-color:#555;">18.7%</span>
<span class="t" style="left:1170.60px;top:481.60px;font-size:10.4px;font-weight:400;color:#333;transform:scaleX(0.9569);">50.0%</span>
<span class="t" style="left:1229.40px;top:481.60px;font-size:10.4px;font-weight:400;color:#333;will-change:transform;">116.3</span>
<span class="t" style="left:903.30px;top:506.70px;font-size:10.4px;font-weight:700;color:#2a2a2a;transform:scaleX(0.9092);">Soft (chg/splt)</span>
<span class="t" style="left:997.50px;top:506.70px;font-size:10.4px;font-weight:400;color:#333;transform:scaleX(1.0378);text-decoration:underline;text-decoration-thickness:1px;text-underline-offset:0.6px;text-decoration-color:#555;">17</span>
<span class="t" style="left:1037.40px;top:506.70px;font-size:10.4px;font-weight:400;color:#333;transform:scaleX(0.9569);text-decoration:underline;text-decoration-thickness:1px;text-underline-offset:0.6px;text-decoration-color:#555;">30.0%</span>
<span class="t" style="left:1081.30px;top:506.70px;font-size:10.4px;font-weight:400;color:#333;transform:scaleX(0.9569);text-decoration:underline;text-decoration-thickness:1px;text-underline-offset:0.6px;text-decoration-color:#555;">21.1%</span>
<span class="t" style="left:1122.00px;top:506.70px;font-size:10.4px;font-weight:400;color:#333;transform:scaleX(0.9569);text-decoration:underline;text-decoration-thickness:1px;text-underline-offset:0.6px;text-decoration-color:#555;">32.5%</span>
<span class="t" style="left:1170.60px;top:506.70px;font-size:10.4px;font-weight:400;color:#333;transform:scaleX(0.9569);">43.8%</span>
<span class="t" style="left:1229.40px;top:506.70px;font-size:10.4px;font-weight:400;color:#333;will-change:transform;">116.7</span>
<span class="t" style="left:903.30px;top:530.70px;font-size:10.4px;font-weight:700;color:#2a2a2a;transform:scaleX(0.9492);">Hard (fast/si/ct)</span>
<span class="t" style="left:997.50px;top:530.70px;font-size:10.4px;font-weight:400;color:#333;transform:scaleX(1.0378);text-decoration:underline;text-decoration-thickness:1px;text-underline-offset:0.6px;text-decoration-color:#555;">57</span>
<span class="t" style="left:1037.40px;top:530.70px;font-size:10.4px;font-weight:400;color:#333;transform:scaleX(0.9569);text-decoration:underline;text-decoration-thickness:1px;text-underline-offset:0.6px;text-decoration-color:#555;">46.8%</span>
<span class="t" style="left:1081.30px;top:530.70px;font-size:10.4px;font-weight:400;color:#333;transform:scaleX(0.9569);text-decoration:underline;text-decoration-thickness:1px;text-underline-offset:0.6px;text-decoration-color:#555;">19.1%</span>
<span class="t" style="left:1122.00px;top:530.70px;font-size:10.4px;font-weight:400;color:#333;transform:scaleX(0.9569);text-decoration:underline;text-decoration-thickness:1px;text-underline-offset:0.6px;text-decoration-color:#555;">14.1%</span>
<span class="t" style="left:1170.60px;top:530.70px;font-size:10.4px;font-weight:400;color:#333;transform:scaleX(0.9569);">66.1%</span>
<span class="t" style="left:1229.40px;top:530.70px;font-size:10.4px;font-weight:400;color:#333;will-change:transform;">114.8</span>
<div class="a" style="left:505px;top:730px;width:390px;height:40px;background:#fff;box-shadow:0 0 34px 8px rgba(0,0,0,.2)"></div>
</main>
<div class="a" style="left:539.200px;top:225px;width:48px;height:48px;border-radius:50%;border:3.900px solid #48e030;background:radial-gradient(circle,rgba(255,255,255,.55) 0%,rgba(250,255,250,.5) 60%,rgba(190,255,180,.55) 100%);box-shadow:0 0 2.500px rgba(80,235,60,.85),inset 0 0 5px 1px rgba(90,235,70,.55)"></div>
<svg style="left:561px;top:246.700px" width="11.100" height="17.600" viewBox="0 0 12 19"><path d="M1.200 1.200v13.400l3.100-3 2.400 5.500 2.200-1-2.400-5.300h4.400z" fill="#000" stroke="#fff" stroke-width=".8"/></svg>
</div>
</body></html>
